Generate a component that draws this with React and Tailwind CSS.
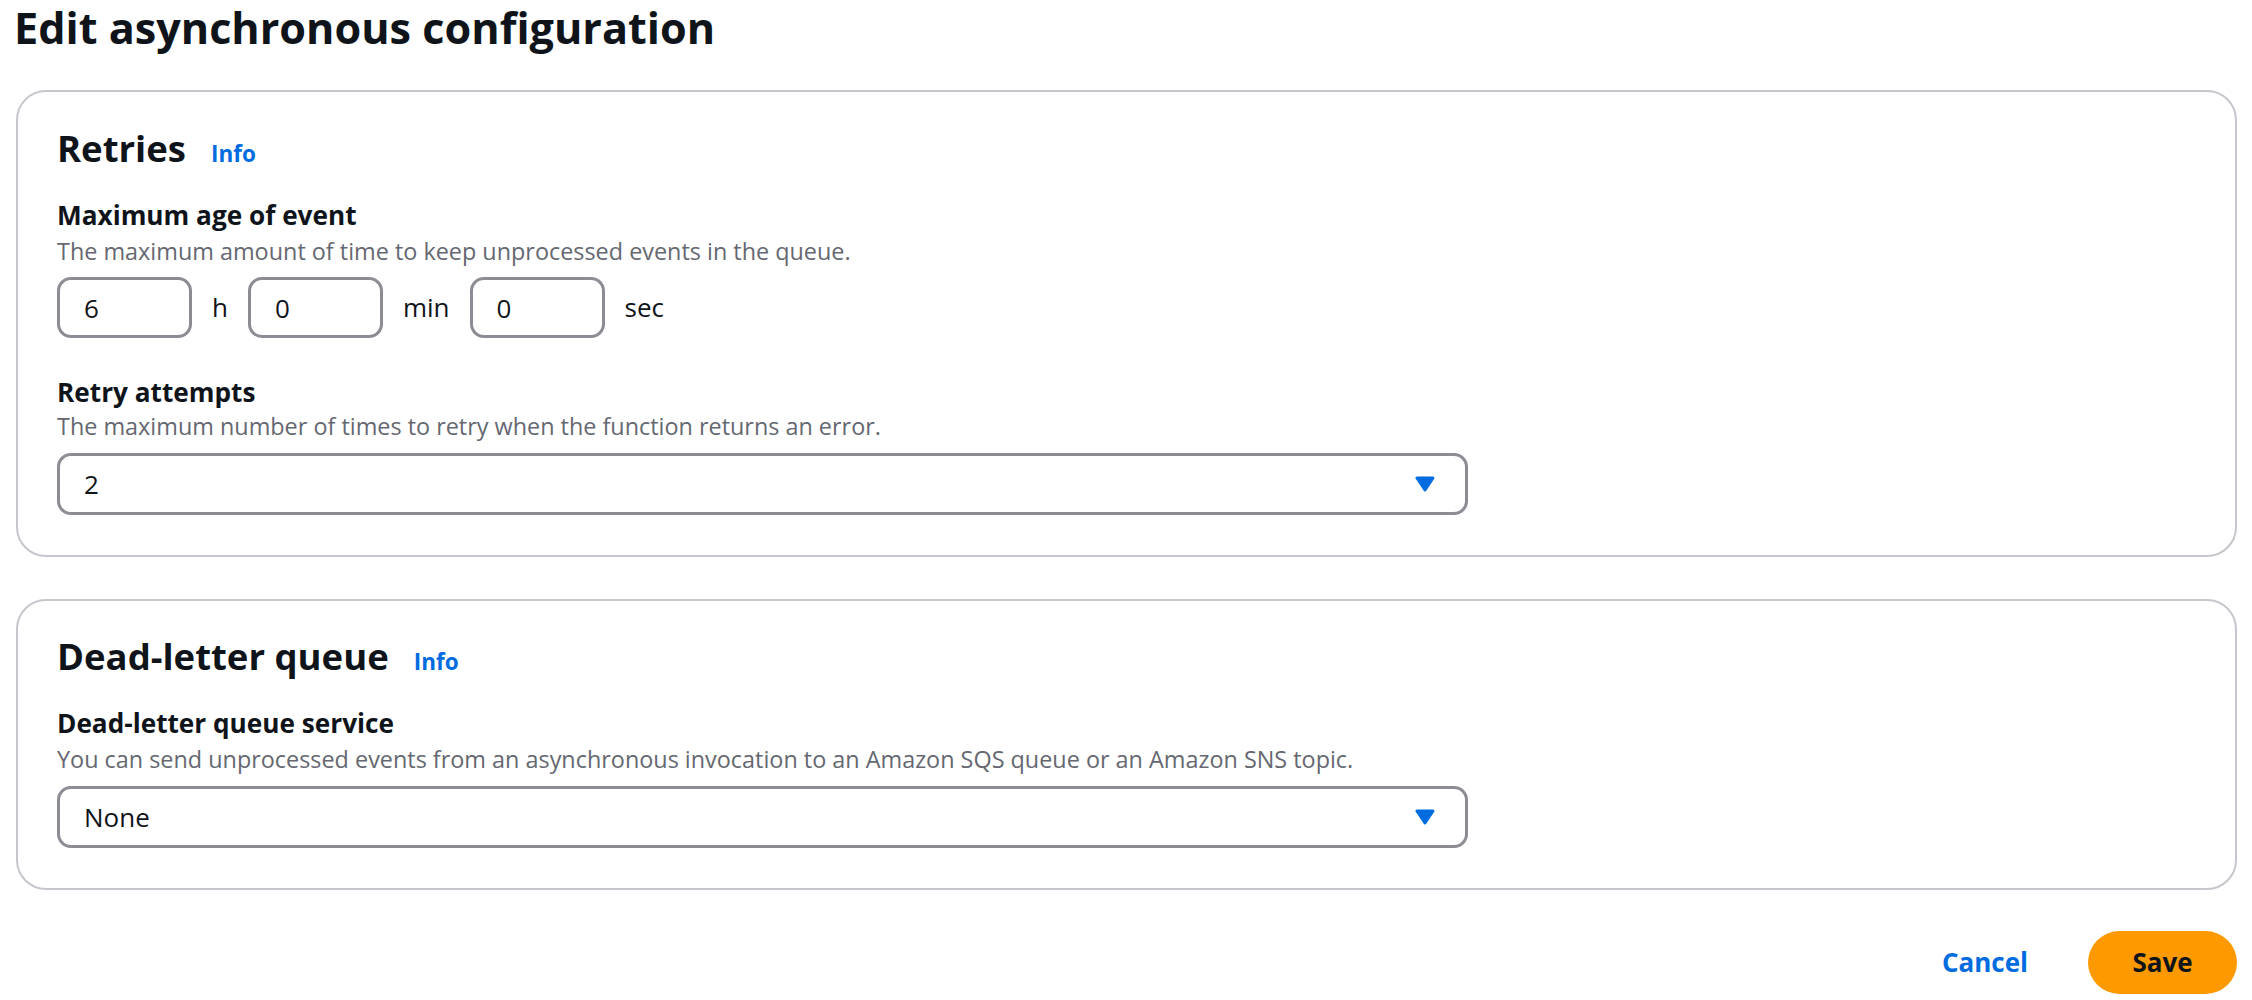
import React from "react";

function Arrow() {
  return (
    <svg width="20" height="16" viewBox="0 0 20 16" className="block">
      <path d="M2 2 L18 2 L10 14 Z" fill="#006ce0" stroke="#006ce0" strokeWidth="3" strokeLinejoin="round" />
    </svg>
  );
}

function NumBox({ value }) {
  return (
    <div className="w-[135px] h-[61px] border-[3px] border-[#8c8c94] rounded-[14px] flex items-center pl-[24px] text-[26px] text-[#0f141a] leading-[34px]">
      {value}
    </div>
  );
}

function Select({ value }) {
  return (
    <div className="w-[1411px] h-[62px] border-[3px] border-[#8c8c94] rounded-[14px] flex items-center justify-between pl-[24px] pr-[30px] text-[26px] text-[#0f141a] leading-[34px]">
      <span>{value}</span>
      <Arrow />
    </div>
  );
}

function Heading({ children }) {
  return (
    <div className="flex items-baseline gap-[25px] h-[46px]">
      <h2 className="text-[36.5px] font-bold leading-[46px] text-[#0f141a]">{children}</h2>
      <span className="text-[22.5px] font-bold text-[#006ce0] leading-[30px]">Info</span>
    </div>
  );
}

function Label({ children, className = "" }) {
  return (
    <div className={"text-[26.2px] font-bold leading-[34px] text-[#0f141a] " + className}>{children}</div>
  );
}

function Desc({ children, className = "" }) {
  return (
    <div className={"text-[23.4px] leading-[30px] text-[#656871] " + className}>{children}</div>
  );
}

export default function App() {
  return (
    <div className="w-full min-h-[1000px] bg-white pl-[16px] pr-[15px] font-['Open_Sans',sans-serif]">
      <h1 className="text-[43.2px] font-bold leading-[56px] text-[#0f141a] ml-[-2px]">
        Edit asynchronous configuration
      </h1>

      <section className="mt-[34px] border-2 border-[#c6c6cd] rounded-[30px] px-[39px] pt-[33px] pb-[40px]">
        <Heading>Retries</Heading>
        <Label className="mt-[27px]">Maximum age of event</Label>
        <Desc className="mt-[4px]">The maximum amount of time to keep unprocessed events in the queue.</Desc>
        <div className="mt-[11px] flex items-center gap-[20px] text-[26px] text-[#0f141a]">
          <NumBox value="6" />
          <span>h</span>
          <NumBox value="0" />
          <span>min</span>
          <NumBox value="0" />
          <span>sec</span>
        </div>
        <Label className="mt-[37px]">Retry attempts</Label>
        <Desc className="mt-[2px]">The maximum number of times to retry when the function returns an error.</Desc>
        <div className="mt-[12px]">
          <Select value="2" />
        </div>
      </section>

      <section className="mt-[42px] border-2 border-[#c6c6cd] rounded-[30px] px-[39px] pt-[32px] pb-[40px]">
        <Heading>Dead-letter queue</Heading>
        <Label className="mt-[27px]">Dead-letter queue service</Label>
        <Desc className="mt-[4px]">
          You can send unprocessed events from an asynchronous invocation to an Amazon SQS queue or an Amazon SNS topic.
        </Desc>
        <div className="mt-[12px]">
          <Select value="None" />
        </div>
      </section>

      <div className="mt-[41px] flex justify-end items-center gap-[60px]">
        <span className="text-[26px] font-bold text-[#006ce0]">Cancel</span>
        <button className="w-[149px] h-[63px] rounded-full bg-[#ff9900] text-[26px] font-bold text-[#0f141a] flex items-center justify-center">
          Save
        </button>
      </div>
    </div>
  );
}
